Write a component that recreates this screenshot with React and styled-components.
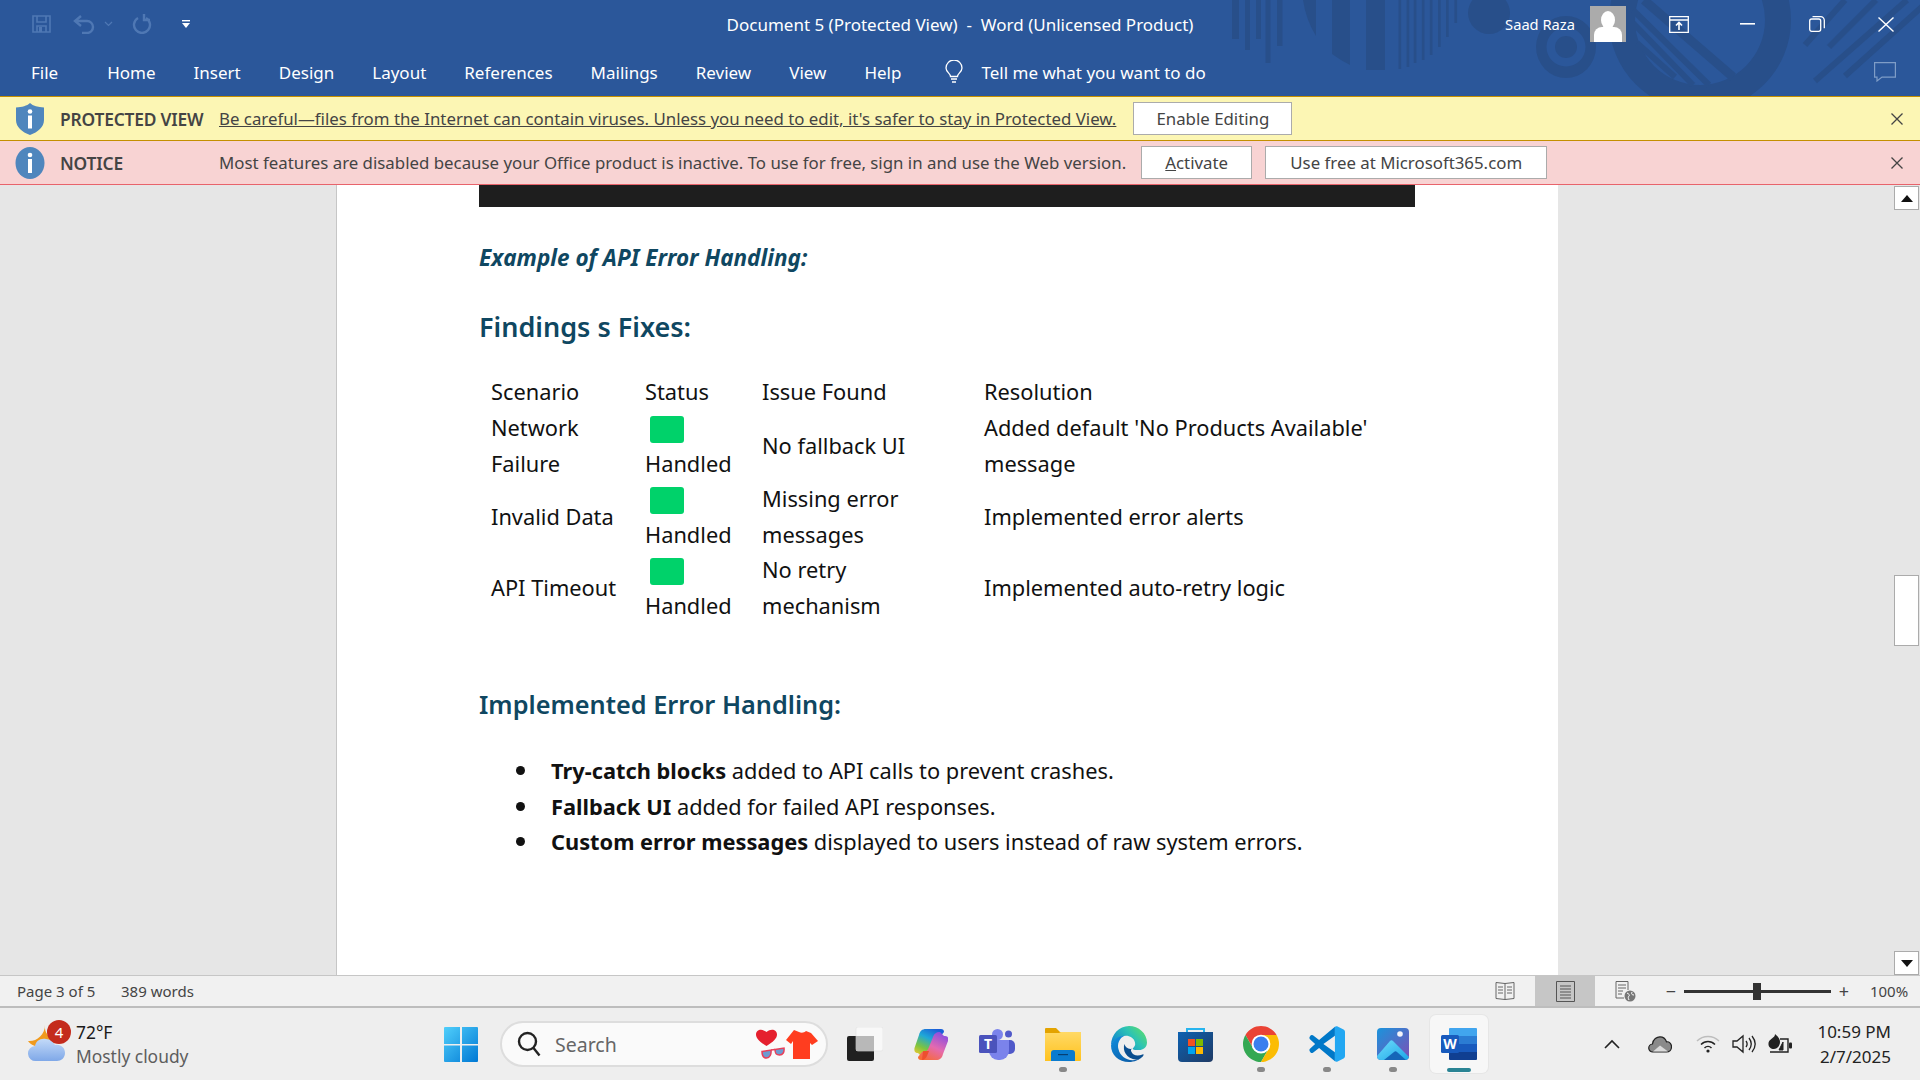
import styled, { createGlobalStyle } from "styled-components";

const UI_FONT = "'Noto Sans', 'Open Sans', sans-serif";
const DOC_FONT = "'Noto Sans', 'Open Sans', sans-serif";

const TABS = ["File", "Home", "Insert", "Design", "Layout", "References", "Mailings", "Review", "View", "Help"];

const ROWS = [
    { id: 1, scenario: <>Network<br />Failure</>, issue: "No fallback UI", fix: <>Added default 'No Products Available'<br />message</> },
    { id: 2, scenario: "Invalid Data", issue: <>Missing error<br />messages</>, fix: "Implemented error alerts" },
    { id: 3, scenario: "API Timeout", issue: <>No retry<br />mechanism</>, fix: "Implemented auto-retry logic" },
];

export default function App() {
    return (
        <Screen>
            <GlobalStyle />
            <TitleBar>
                <RibbonArt />
                <TitleRow>
                    <QuickAccess>
                        <SaveIcon />
                        <UndoIcon />
                        <MiniChevron />
                        <RedoIcon />
                        <CustomizeIcon />
                    </QuickAccess>
                    <DocTitle>Document 5 (Protected View)&nbsp; -&nbsp; Word (Unlicensed Product)</DocTitle>
                    <WindowArea>
                        <UserName>Saad Raza</UserName>
                        <Avatar />
                        <WindowButton><DisplayIcon /></WindowButton>
                        <WindowButton><MinimizeIcon /></WindowButton>
                        <WindowButton><RestoreIcon /></WindowButton>
                        <WindowButton><CloseIcon /></WindowButton>
                    </WindowArea>
                </TitleRow>
                <TabRow>
                    {TABS.map(tab => <Tab key={tab}>{tab}</Tab>)}
                    <BulbIcon />
                    <TellMe>Tell me what you want to do</TellMe>
                    <CommentIcon />
                </TabRow>
            </TitleBar>

            <MessageBar $tone="warning">
                <ShieldIcon />
                <BarLabel>PROTECTED VIEW</BarLabel>
                <BarLink>Be careful—files from the Internet can contain viruses. Unless you need to edit, it's safer to stay in Protected View.</BarLink>
                <BarButton $width={159} $left={17}>Enable Editing</BarButton>
                <BarClose><BarCloseIcon /></BarClose>
            </MessageBar>
            <MessageBar $tone="notice">
                <InfoIcon />
                <BarLabel>NOTICE</BarLabel>
                <BarText>Most features are disabled because your Office product is inactive. To use for free, sign in and use the Web version.</BarText>
                <BarButton $width={111} $left={15}><u>A</u>ctivate</BarButton>
                <BarButton $width={282} $left={13}>Use free at Microsoft365.com</BarButton>
                <BarClose><BarCloseIcon /></BarClose>
            </MessageBar>

            <Workspace>
                <Canvas>
                    <Page>
                        <BlackBlock />
                        <ExampleTitle>Example of API Error Handling:</ExampleTitle>
                        <FindingsTitle>Findings s Fixes:</FindingsTitle>
                        <FindingsTable>
                            <colgroup>
                                <ColA />
                                <ColB />
                                <ColC />
                                <col />
                            </colgroup>
                            <thead>
                                <tr>
                                    <HeadCell>Scenario</HeadCell>
                                    <HeadCell>Status</HeadCell>
                                    <HeadCell>Issue Found</HeadCell>
                                    <HeadCell>Resolution</HeadCell>
                                </tr>
                            </thead>
                            <tbody>
                                {ROWS.map(row =>
                                    <tr key={row.id}>
                                        <Cell>{row.scenario}</Cell>
                                        <Cell>
                                            <ChipLine><GreenChip /></ChipLine>
                                            Handled
                                        </Cell>
                                        <Cell>{row.issue}</Cell>
                                        <Cell>{row.fix}</Cell>
                                    </tr>
                                )}
                            </tbody>
                        </FindingsTable>
                        <ImplementedTitle>Implemented Error Handling:</ImplementedTitle>
                        <BulletList>
                            <li><span><strong>Try-catch blocks</strong> added to API calls to prevent crashes.</span></li>
                            <li><span><strong>Fallback UI</strong> added for failed API responses.</span></li>
                            <li><span><strong>Custom error messages</strong> displayed to users instead of raw system errors.</span></li>
                        </BulletList>
                    </Page>
                </Canvas>
                <ScrollBar>
                    <ScrollButton><ArrowGlyph /></ScrollButton>
                    <ScrollTrack><ScrollThumb /></ScrollTrack>
                    <ScrollButton><ArrowGlyph $down /></ScrollButton>
                </ScrollBar>
            </Workspace>

            <StatusBar>
                <StatusText $width={104}>Page 3 of 5</StatusText>
                <StatusText>389 words</StatusText>
                <ViewArea>
                    <ViewButton><ReadIcon /></ViewButton>
                    <ViewButton $active><PrintIcon /></ViewButton>
                    <ViewButton><WebIcon /></ViewButton>
                </ViewArea>
                <ZoomControl>
                    <ZoomSign>−</ZoomSign>
                    <ZoomTrack><ZoomThumb /></ZoomTrack>
                    <ZoomSign>+</ZoomSign>
                </ZoomControl>
                <ZoomValue>100%</ZoomValue>
            </StatusBar>

            <Taskbar>
                <Weather>
                    <WeatherArt>
                        <WeatherIcon />
                        <WeatherBadge>4</WeatherBadge>
                    </WeatherArt>
                    <WeatherText>
                        <Temperature>72°F</Temperature>
                        <Forecast>Mostly cloudy</Forecast>
                    </WeatherText>
                </Weather>
                <TaskSlot><StartIcon /></TaskSlot>
                <SearchBox>
                    <SearchIcon />
                    <SearchLabel>Search</SearchLabel>
                    <SearchArt />
                </SearchBox>
                <TaskSlot><TaskViewIcon /></TaskSlot>
                <TaskSlot><CopilotIcon /></TaskSlot>
                <TaskSlot><TeamsIcon /></TaskSlot>
                <TaskSlot $running><FolderIcon /></TaskSlot>
                <TaskSlot><EdgeIcon /></TaskSlot>
                <TaskSlot><StoreIcon /></TaskSlot>
                <TaskSlot $running><ChromeIcon /></TaskSlot>
                <TaskSlot $running><VsCodeIcon /></TaskSlot>
                <TaskSlot $running><PhotosIcon /></TaskSlot>
                <TaskSlot $active><WordIcon /></TaskSlot>
                <Tray>
                    <TrayChevron />
                    <TrayCloud />
                    <TrayWifi />
                    <TraySpeaker />
                    <TrayBattery />
                </Tray>
                <Clock>
                    <span>10:59 PM</span>
                    <span>2/7/2025</span>
                </Clock>
            </Taskbar>
        </Screen>
    );
}

/* ---------- drawings ---------- */

function RibbonArt() {
    const bars = [[1232, 7, 39], [1245, 5, 50], [1256, 5, 39], [1265.5, 5, 63], [1277, 5.5, 46], [1366, 19, 70],
        [1398.5, 2.7, 69], [1406.6, 2.7, 67], [1413.7, 2.7, 63], [1421.8, 2.7, 60], [1429.8, 2.7, 55], [1438, 2.7, 47], [1446, 2.7, 37], [1454.4, 2.7, 23]];
    const stripes = [[1644, 0, 1733, 77, 9], [1633, 10, 1709, 85, 6], [1633, 23, 1693, 85, 6], [1637, 43, 1675, 77, 6]];
    const slashes = [[1805, 45, 1845, 0], [1829, 47, 1876, 0], [1815, 81, 1907, 0], [1845, 76, 1925, 4]];
    return (
        <Art viewBox="0 0 1920 96" width="1920" height="96">
            <g fill="#284F8A">
                {bars.map(b => <rect key={b[0]} x={b[0]} y="0" width={b[1]} height={b[2]} />)}
                <path d="M1303 0h13v36Q1306 20 1303 0z" />
                <path d="M1332 0h18v65Q1340 60 1332 54z" />
                <circle cx="1489" cy="13" r="21" />
                <path fillRule="evenodd" d="M1536 47a30 31 0 1 0 60 0a30 31 0 1 0-60 0zM1546.500 47a19.500 19.500 0 1 0 39 0a19.500 19.500 0 1 0-39 0z" />
                <circle cx="1566" cy="47" r="11" />
                <path fillRule="evenodd" d="M1609 20a91 91 0 1 0 182 0a91 91 0 1 0-182 0zM1635 20a65 65 0 1 0 130 0a65 65 0 1 0-130 0z" />
            </g>
            <g stroke="#284F8A" strokeLinecap="butt">
                {stripes.map(s => <line key={s[1]} x1={s[0]} y1={s[1]} x2={s[2]} y2={s[3]} strokeWidth={s[4]} />)}
                {slashes.map(s => <line key={s[0]} x1={s[0]} y1={s[1]} x2={s[2]} y2={s[3]} strokeWidth="6" />)}
            </g>
        </Art>
    );
}

const SaveIcon = () => (
    <QatSvg $left={0} width="19" height="18" viewBox="0 0 19 18" fill="none" stroke="#4F78B4" strokeWidth="1.6">
        <path d="M1 1h17v16H1z" />
        <path d="M5 1v6h9V1M5 17v-6h9v6" />
        <path d="M7 12h3v5H7z" fill="#4F78B4" stroke="none" />
    </QatSvg>
);

const UndoIcon = () => (
    <QatSvg $left={22} width="23" height="19" viewBox="0 0 23 19" fill="none" stroke="#4F78B4" strokeWidth="2.4">
        <path d="M2 6h12a6 6 0 0 1 6 6v0a6 6 0 0 1-6 6H9" />
        <path d="M8 1L2 6l6 5" />
    </QatSvg>
);

const MiniChevron = () => (
    <QatSvg $left={8} width="9" height="6" viewBox="0 0 9 6" fill="none" stroke="#4F78B4" strokeWidth="1.2">
        <path d="M1 1l3.500 3.500L8 1" />
    </QatSvg>
);

const RedoIcon = () => (
    <QatSvg $left={19} width="20" height="20" viewBox="0 0 20 20" fill="none" stroke="#4F78B4" strokeWidth="2.4">
        <path d="M6 4a8 8 0 1 0 8 0" />
        <path d="M12 0v6h6" />
    </QatSvg>
);

const CustomizeIcon = () => (
    <QatSvg $left={30} width="8" height="8" viewBox="0 0 8 8" fill="#fff">
        <rect x="0" y="0" width="8" height="1.400" />
        <path d="M0 3h8L4 8z" />
    </QatSvg>
);

const DisplayIcon = () => (
    <svg width="20" height="17" viewBox="0 0 20 17" fill="none" stroke="#fff" strokeWidth="1.300">
        <path d="M.7.7h18.600v15.600H.7zM.7 4h18.600" />
        <path d="M10 14V7M7 9.500L10 6.500l3 3" strokeWidth="1.600" />
    </svg>
);

const MinimizeIcon = () => (
    <svg width="15" height="2" viewBox="0 0 15 2"><rect width="15" height="1.600" fill="#fff" /></svg>
);

const RestoreIcon = () => (
    <svg width="16" height="16" viewBox="0 0 16 16" fill="none" stroke="#fff" strokeWidth="1.300">
        <rect x=".7" y="3" width="11" height="12.300" rx="2" />
        <path d="M3.500.7h8a3.500 3.500 0 0 1 3.800 3.500v8" />
    </svg>
);

const CloseIcon = () => (
    <svg width="16" height="15" viewBox="0 0 16 15" stroke="#fff" strokeWidth="1.400"><path d="M.5.500l15 14M15.500.500l-15 14" /></svg>
);

const BulbIcon = () => (
    <BulbSvg width="18" height="24" viewBox="0 0 18 24" fill="none" stroke="#fff" strokeWidth="1.300">
        <path d="M5.500 16.500c0-3-4.500-4.500-4.500-8.500a8 8 0 0 1 16 0c0 4-4.500 5.500-4.500 8.500z" />
        <path d="M6 19h6M7 22h4" />
    </BulbSvg>
);

const CommentIcon = () => (
    <CommentSvg width="22" height="20" viewBox="0 0 22 20" fill="none" stroke="#7F9DC7" strokeWidth="1.200">
        <path d="M.6.6h20.800v14.500H8L3 19v-3.900H.6z" />
    </CommentSvg>
);

const ShieldIcon = () => (
    <svg width="30" height="32" viewBox="0 0 30 32">
        <path d="M15 0c3 3 8 4 14 4.500V17c0 7-6 12-14 15C7 29 1 24 1 17V4.500C7 4 12 3 15 0z" fill="#4F86BD" />
        <circle cx="15" cy="8.500" r="2.300" fill="#fff" />
        <rect x="13" y="12.500" width="4" height="13" fill="#fff" />
    </svg>
);

const InfoIcon = () => (
    <svg width="30" height="32" viewBox="0 0 30 32">
        <ellipse cx="15" cy="16" rx="14.500" ry="16" fill="#4F86BD" />
        <circle cx="15" cy="8" r="2.300" fill="#fff" />
        <rect x="13" y="12" width="4" height="14" fill="#fff" />
    </svg>
);

const BarCloseIcon = () => (
    <svg width="12" height="12" viewBox="0 0 12 12" stroke="#444" strokeWidth="1.300"><path d="M.5.500l11 11M11.500.500l-11 11" /></svg>
);

const ReadIcon = () => (
    <svg width="20" height="20" viewBox="0 0 20 20" fill="none" stroke="#666" strokeWidth="1">
        <path d="M1 1.500l9 1 9-1v16l-9 1-9-1zM10 2.500v16" />
        <path d="M3 6h5M3 9h5M3 12h5M12 6h5M12 9h5M12 12h5" />
    </svg>
);

const PrintIcon = () => (
    <svg width="19" height="21" viewBox="0 0 19 21" fill="none" stroke="#555" strokeWidth="1">
        <path d="M.5.500h18v20H.5zM4 5h11M4 8h11M4 11h11M4 14h11M4 17h11" />
    </svg>
);

const WebIcon = () => (
    <svg width="21" height="21" viewBox="0 0 21 21" fill="none" stroke="#666" strokeWidth="1">
        <path d="M9 17H1V.5h12V9M3 4h8M3 7h8M3 10h5M3 13h4" />
        <circle cx="15" cy="15" r="5.500" fill="#777" stroke="none" />
        <path d="M12 12c2 1 3 2 2 3s-1 2 0 4M17 11c-1 2 0 3 2 3" stroke="#fff" />
    </svg>
);

const WeatherIcon = () => (
    <svg width="38" height="38" viewBox="0 0 38 38">
        <defs>
            <linearGradient id="cloudFill" x1="0" y1="0" x2="0" y2="1">
                <stop offset="0" stopColor="#C3DAF8" />
                <stop offset="1" stopColor="#7FA8E8" />
            </linearGradient>
        </defs>
        <path d="M17 0c-1 8 4 13 12 14-3 5-8 8-15 8-6 0-11-2-14-6 8 1 17-6 17-16z" fill="#F09A1E" />
        <path d="M8 36a7.500 7.500 0 0 1-1-15c1-5 5-8 11-7 4 0 7 2 9 6 6-1 10 3 10 8s-4 8-8 8z" fill="url(#cloudFill)" />
    </svg>
);

const StartIcon = () => (
    <svg width="34" height="35" viewBox="0 0 34 35">
        <defs>
            <linearGradient id="startFill" x1="0" y1="0" x2="1" y2="1">
                <stop offset="0" stopColor="#50CFFB" />
                <stop offset="1" stopColor="#0078D4" />
            </linearGradient>
        </defs>
        <path d="M0 1a1 1 0 0 1 1-1h15v17H0zM18 0h15a1 1 0 0 1 1 1v16H18zM0 18.500h16V35H1a1 1 0 0 1-1-1zM18 18.500h16V34a1 1 0 0 1-1 1H18z" fill="url(#startFill)" />
    </svg>
);

const SearchIcon = () => (
    <svg width="24" height="26" viewBox="0 0 24 26" fill="none" stroke="#222" strokeWidth="2.400">
        <circle cx="10.500" cy="10.500" r="8.500" />
        <path d="M16.500 17l6 7.500" />
    </svg>
);

const SearchArt = () => (
    <SearchArtSvg width="62" height="30" viewBox="0 0 62 30">
        <path d="M10.500 17C4 13 0 9.500 0 5.500 0 1 5.500-1 10.500 3c5-4 10.500-2 10.500 2.500 0 4-4 7.500-10.500 11.500z" fill="#E5202E" />
        <path d="M6 22.500l9-1.500c.5 4-1 8-4.500 8S6 26.500 6 22.500zM19 20.500l9-1.500c.5 4-1 7-4.500 7S19 24.500 19 20.500z" fill="#6D9BD1" stroke="#E8405A" strokeWidth="1.500" />
        <path d="M15 21l4-.5" stroke="#E8405A" strokeWidth="1.500" />
        <path d="M38 1l5 2c2 1 5 1 7-1l5 2 7 8-6 4-2-2v16H37V12l-2 3-5-4z" fill="#FF3D1F" />
    </SearchArtSvg>
);

const TaskViewIcon = () => (
    <svg width="36" height="34" viewBox="0 0 36 34">
        <rect x="0" y="9" width="27" height="25" rx="2" fill="#202020" />
        <rect x="9" y="0" width="27" height="24" rx="2" fill="#F8F8F8" stroke="#E0E0E0" strokeWidth=".6" />
        <rect x="9" y="9" width="18" height="15" fill="#B8B8B8" />
    </svg>
);

const CopilotIcon = () => (
    <svg width="34" height="31" viewBox="0 0 34 31">
        <defs>
            <linearGradient id="copilotA" x1=".7" y1="0" x2=".2" y2="1">
                <stop offset="0" stopColor="#1B5FD8" />
                <stop offset=".35" stopColor="#1FA8D8" />
                <stop offset=".7" stopColor="#7DC43F" />
                <stop offset="1" stopColor="#F5C92E" />
            </linearGradient>
            <linearGradient id="copilotB" x1=".7" y1="0" x2=".2" y2="1">
                <stop offset="0" stopColor="#8A4FE0" />
                <stop offset=".5" stopColor="#E46AB0" />
                <stop offset="1" stopColor="#F86B32" />
            </linearGradient>
        </defs>
        <path d="M12 0h15c2 0 3 1 3 3l-4 5c-4 0-6 2-7 5l-4 10c-1 3-3 5-7 5l-4-4H4c-3 0-4-2-3.500-5L5 6C6 2 8 0 12 0z" fill="url(#copilotA)" />
        <path d="M22 31H7c-2 0-3-1-3-3l4-5c4 0 6-2 7-5l4-10c1-3 3-5 7-5l4 4h1c3 0 3.500 2 3 5l-5 13c-1 4-3 6-7 6z" fill="url(#copilotB)" />
        <path d="M9 22h6l-2 5c-1 2-3 4-5 4z" fill="#EE4F2E" />
    </svg>
);

const TeamsIcon = () => (
    <svg width="36" height="32" viewBox="0 0 36 32">
        <circle cx="18.500" cy="6.500" r="5.500" fill="#7B83EB" />
        <circle cx="29.500" cy="6" r="3.500" fill="#5059C9" />
        <rect x="24" y="12" width="12" height="14" rx="5" fill="#5059C9" />
        <path d="M10 12h20v11a9 9 0 0 1-9 9h-2a9 9 0 0 1-9-9z" fill="#7B83EB" />
        <rect x="0" y="7" width="18" height="18" rx="1.500" fill="#4B53BC" />
        <text x="9" y="21" textAnchor="middle" fill="#fff" fontSize="14" fontWeight="700" fontFamily="'Noto Sans', sans-serif">T</text>
    </svg>
);

const FolderIcon = () => (
    <svg width="36" height="33" viewBox="0 0 36 33">
        <defs>
            <linearGradient id="folderFill" x1="0" y1="0" x2="0" y2="1">
                <stop offset="0" stopColor="#FFD966" />
                <stop offset="1" stopColor="#FFC21E" />
            </linearGradient>
        </defs>
        <path d="M0 1a1 1 0 0 1 1-1h10l4 4h21v6H0z" fill="#E3A300" />
        <path d="M0 5h14l2-1h20v28a1 1 0 0 1-1 1H0z" fill="url(#folderFill)" />
        <path d="M6 25a3 3 0 0 1 3-3h18a3 3 0 0 1 3 3v8H6z" fill="#0A7BCF" />
        <rect x="13" y="26" width="10" height="1.200" fill="#063F73" />
    </svg>
);

const EdgeIcon = () => (
    <svg width="36" height="36" viewBox="0 0 48 48">
        <defs>
            <linearGradient id="edgeTop" x1="0" y1=".8" x2="1" y2=".2">
                <stop offset="0" stopColor="#0C7BD3" />
                <stop offset=".6" stopColor="#2CC3B5" />
                <stop offset="1" stopColor="#5BDD6C" />
            </linearGradient>
            <linearGradient id="edgeLeft" x1="0" y1="0" x2=".7" y2="1">
                <stop offset="0" stopColor="#0F8FE0" />
                <stop offset="1" stopColor="#0B5DA8" />
            </linearGradient>
        </defs>
        <path d="M24 0c13 0 24 10 24 22 0 7-6 10-10 10h-6c-2 0-3-1-3-2 2-2 4-4 3-8-1-6-7-9-12-9C11 13 3 20 0 26 0 11 11 0 24 0z" fill="url(#edgeTop)" />
        <path d="M0 26c3-8 10-13 18-13-7 3-10 11-8 18 2 9 12 17 24 14 3-1 6-2 8-4-4 4-11 7-18 7C10 48 0 38 0 26z" fill="url(#edgeLeft)" />
        <path d="M18 24c-3 8 2 20 16 21 3 0 6-2 8-4 2-2 2-4 0-3-7 3-13 1-15-4-1-2 0-4 2-4-5 2-10-1-11-6z" fill="#0A4E8F" />
    </svg>
);

const StoreIcon = () => (
    <svg width="35" height="35" viewBox="0 0 35 35">
        <defs>
            <linearGradient id="storeFill" x1="0" y1="0" x2="1" y2="1">
                <stop offset="0" stopColor="#0D62B2" />
                <stop offset="1" stopColor="#1F3A64" />
            </linearGradient>
        </defs>
        <path d="M9 6V2h17v4" fill="none" stroke="#27B4EE" strokeWidth="2" />
        <path d="M0 5h35v26a4 4 0 0 1-4 4H4a4 4 0 0 1-4-4z" fill="url(#storeFill)" />
        <rect x="10" y="12" width="7" height="7" fill="#F25022" />
        <rect x="18" y="12" width="7" height="7" fill="#7FBA00" />
        <rect x="10" y="20" width="7" height="7" fill="#00A4EF" />
        <rect x="18" y="20" width="7" height="7" fill="#FFB900" />
    </svg>
);

const ChromeIcon = () => (
    <svg width="36" height="36" viewBox="0 0 48 48">
        <path d="M3.220 12A24 24 0 0 1 44.780 12H24L13.600 30z" fill="#EA4335" />
        <path d="M3.220 12L13.600 30H34.400L24 48A24 24 0 0 1 3.220 12z" fill="#34A853" />
        <path d="M44.780 12H24L34.400 30 24 48A24 24 0 0 0 44.780 12z" fill="#FBBC04" />
        <circle cx="24" cy="24" r="12.500" fill="#fff" />
        <circle cx="24" cy="24" r="10" fill="#3B7FEE" />
    </svg>
);

const VsCodeIcon = () => (
    <svg width="36" height="36" viewBox="0 0 100 100">
        <path d="M72 2L28 39 11 26Q8 24 5 26L2 30Q0 33 2 36L17 50 2 64Q0 67 2 70L5 74Q8 76 11 74L28 61 72 98V73L40 50 72 27z" fill="#0078C8" />
        <path d="M72 2Q75 0 78 1L96 10Q100 12 100 16V84Q100 88 96 90L78 99Q75 100 72 98z" fill="#22A7F2" />
    </svg>
);

const PhotosIcon = () => (
    <svg width="32" height="32" viewBox="0 0 32 32">
        <defs>
            <linearGradient id="photosSky" x1="0" y1="0" x2="1" y2="1">
                <stop offset="0" stopColor="#1A94DC" />
                <stop offset="1" stopColor="#7E4FB5" />
            </linearGradient>
            <linearGradient id="photosHill" x1="0" y1="0" x2="1" y2="1">
                <stop offset="0" stopColor="#6FDCFB" />
                <stop offset="1" stopColor="#1CA6E8" />
            </linearGradient>
        </defs>
        <rect width="32" height="32" rx="4" fill="url(#photosSky)" />
        <circle cx="23" cy="6" r="2.800" fill="#F4F4FA" />
        <path d="M0 28L13 13c1-1 2-1 3 0l16 16v-1 0a4 4 0 0 1-4 4H4a4 4 0 0 1-4-4z" fill="url(#photosHill)" />
        <path d="M7 32l10-8c1-1 2-1 3 0l9 8z" fill="#1566B8" />
    </svg>
);

const WordIcon = () => (
    <svg width="36" height="32" viewBox="0 0 36 32">
        <path d="M9 0h26a1 1 0 0 1 1 1v7H8V1a1 1 0 0 1 1-1z" fill="#41A5EE" />
        <rect x="8" y="8" width="28" height="8" fill="#2B7CD3" />
        <rect x="8" y="16" width="28" height="8" fill="#185ABD" />
        <path d="M8 24h28v7a1 1 0 0 1-1 1H9a1 1 0 0 1-1-1z" fill="#103F91" />
        <rect x="0" y="7" width="18" height="18" rx="1.500" fill="#185ABD" />
        <text x="9" y="21" textAnchor="middle" fill="#fff" fontSize="14" fontWeight="700" fontFamily="'Noto Sans', sans-serif">W</text>
    </svg>
);

const TrayChevron = () => (
    <TraySvg $gap={28} width="16" height="10" viewBox="0 0 16 10" fill="none" stroke="#222" strokeWidth="1.600">
        <path d="M1 9l7-7 7 7" />
    </TraySvg>
);

const TrayCloud = () => (
    <TraySvg $gap={24} width="24" height="17" viewBox="0 0 24 17">
        <path d="M5 16a4 4 0 0 1-.5-8C5 3 9 .8 12 .8c3 0 5.500 2 6.500 5 3-.3 5 2 5 5s-2 5.200-5 5.200z" fill="#8A8A8A" stroke="#222" strokeWidth="1.200" />
        <path d="M5 15.400l7-6 8 6z" fill="#DADADA" />
    </TraySvg>
);

const TrayWifi = () => (
    <TraySvg $gap={12} width="24" height="18" viewBox="0 0 24 18" fill="none" strokeWidth="1.500">
        <path d="M1 6c6-6 16-6 22 0" stroke="#BDBDBD" />
        <path d="M5 9.500c4-4 10-4 14 0M8.500 13c2-2 5-2 7 0" stroke="#222" />
        <circle cx="12" cy="16" r="1.600" fill="#222" />
    </TraySvg>
);

const TraySpeaker = () => (
    <TraySvg $gap={12} width="24" height="20" viewBox="0 0 24 20" fill="none" stroke="#222" strokeWidth="1.300">
        <path d="M1 7h4l6-5v16l-6-5H1zM14 7c1.500 2 1.500 4 0 6M17 4c3 4 3 8 0 12M20 2c4 5 4 11 0 16" />
    </TraySvg>
);

const TrayBattery = () => (
    <TraySvg $gap={0} width="24" height="20" viewBox="0 0 24 20">
        <path d="M7 0c2 2 5 4 5 8s-3 7-6 7-6-2-5.500-6C1 6 4 5 5 3.500 6 3 7 2 7 0z" fill="#222" />
        <path d="M12 5h8v13H2" fill="none" stroke="#222" strokeWidth="1.400" />
        <rect x="21" y="8.500" width="3" height="6" rx="1" fill="#222" />
        <path d="M5 15l5-7M11 16l4-8v8z" stroke="#222" strokeWidth="1" fill="#222" />
    </TraySvg>
);

/* ---------- page ---------- */

const GlobalStyle = createGlobalStyle`
    html, body {
        margin: 0;
        padding: 0;
        overflow: hidden;
    }

    * {
        box-sizing: border-box;
    }
`;

const Screen = styled.div`
    width: 1920px;
    height: 1080px;
    display: flex;
    flex-direction: column;
    overflow: hidden;
    font-family: ${UI_FONT};
    color: #444444;
`;

const TitleBar = styled.header`
    position: relative;
    height: 96px;
    flex: none;
    background-color: #2B579A;
    color: #FFFFFF;
`;

const Art = styled.svg`
    position: absolute;
    top: 0;
    left: 0;
`;

const TitleRow = styled.div`
    position: relative;
    height: 48px;
    display: grid;
    grid-template-columns: 1fr auto 1fr;
    align-items: center;
`;

const QuickAccess = styled.div`
    display: flex;
    align-items: center;
    padding-left: 32px;
`;

const QatSvg = styled.svg`
    flex: none;
    margin-left: ${props => props.$left}px;
`;

const DocTitle = styled.div`
    font-size: 17px;
    white-space: nowrap;
`;

const WindowArea = styled.div`
    display: flex;
    align-items: center;
    justify-content: flex-end;
    height: 48px;
`;

const UserName = styled.span`
    font-size: 14.7px;
    margin-right: 15px;
`;

const Avatar = styled.div`
    position: relative;
    width: 36px;
    height: 36px;
    margin-right: 18px;
    background-color: #ABABAB;
    overflow: hidden;

    &::before {
        content: "";
        position: absolute;
        top: 5px;
        left: 11px;
        width: 14px;
        height: 18px;
        border-radius: 50%;
        background-color: #FFFFFF;
    }

    &::after {
        content: "";
        position: absolute;
        top: 21px;
        left: 4px;
        width: 28px;
        height: 16px;
        border-radius: 8px 8px 0 0;
        background-color: #FFFFFF;
    }
`;

const WindowButton = styled.div`
    width: 69px;
    height: 48px;
    display: flex;
    align-items: center;
    justify-content: center;
`;

const TabRow = styled.nav`
    position: relative;
    height: 48px;
    display: flex;
    align-items: center;
    gap: 38px;
    padding-left: 31px;
`;

const Tab = styled.span`
    font-size: 17px;

    &:first-child {
        margin-right: 11px;
    }
`;

const BulbSvg = styled.svg`
    margin-left: 6px;
    flex: none;
`;

const TellMe = styled.span`
    font-size: 17px;
    margin-left: -20px;
`;

const CommentSvg = styled.svg`
    margin-left: auto;
    margin-right: 24px;
`;

const MessageBar = styled.div`
    height: ${props => props.$tone === 'warning' ? 45 : 44}px;
    flex: none;
    display: flex;
    align-items: center;
    padding-left: 15px;
    font-size: 16.83px;
    white-space: nowrap;
    background-color: ${props => props.$tone === 'warning' ? '#FCF6B4' : '#F8D3D3'};
    border-top: ${props => props.$tone === 'warning' ? '1px solid #C48F00' : 'none'};
    border-bottom: 1px solid ${props => props.$tone === 'warning' ? '#C48F00' : '#E8636B'};
`;

const BarLabel = styled.span`
    width: 159px;
    margin-left: 15px;
    font-weight: 600;
    font-size: 17.4px;
    letter-spacing: -0.2px;
`;

const BarText = styled.span`
`;

const BarLink = styled(BarText)`
    text-decoration: underline;
`;

const BarButton = styled.div`
    width: ${props => props.$width}px;
    height: 33px;
    margin-left: ${props => props.$left}px;
    display: flex;
    align-items: center;
    justify-content: center;
    background-color: #FFFFFF;
    border: 1px solid #ABABAB;
`;

const BarClose = styled.div`
    margin-left: auto;
    margin-right: 17px;
    display: flex;
`;

const Workspace = styled.main`
    flex: 1;
    min-height: 0;
    display: flex;
    background-color: #E6E6E6;
`;

const Canvas = styled.div`
    flex: 1;
    display: flex;
    justify-content: center;
    overflow: hidden;
`;

const Page = styled.article`
    width: 1222px;
    padding: 0 143px 0 142px;
    background-color: #FFFFFF;
    border-left: 1px solid #C6C6C6;
    font-family: ${DOC_FONT};
    color: #111111;
    font-size: 21.8px;
`;

const BlackBlock = styled.div`
    height: 22px;
    background-color: #1E1E1E;
`;

const ExampleTitle = styled.h4`
    margin: 36px 0 0;
    line-height: 30px;
    font-size: 22.5px;
    font-style: italic;
    font-weight: 700;
    color: #0F4761;
`;

const FindingsTitle = styled.h3`
    margin: 36px 0 0;
    line-height: 36px;
    font-size: 27px;
    font-weight: 600;
    color: #0F4761;
`;

const ImplementedTitle = styled(FindingsTitle)`
    margin-top: 63px;
    font-size: 25.3px;
`;

const FindingsTable = styled.table`
    width: 100%;
    margin-top: 29px;
    border-collapse: collapse;
    table-layout: fixed;
`;

const ColA = styled.col`
    width: 154px;
`;

const ColB = styled.col`
    width: 117px;
`;

const ColC = styled.col`
    width: 222px;
`;

const HeadCell = styled.th`
    padding: 0 0 0 12px;
    height: 36px;
    line-height: 36px;
    font-weight: 400;
    text-align: left;
`;

const Cell = styled.td`
    padding: 0 0 0 12px;
    line-height: 35.5px;
    white-space: nowrap;
    vertical-align: middle;
`;

const ChipLine = styled.div`
    height: 35.5px;
    display: flex;
    align-items: center;
    padding: 3px 0 0 5px;
`;

const GreenChip = styled.span`
    width: 34px;
    height: 27px;
    border-radius: 3px;
    background-color: #00D26A;
`;

const BulletList = styled.ul`
    margin: 31px 0 0;
    padding: 0 0 0 37px;
    list-style: none;
    line-height: 35.5px;

    li {
        display: flex;
        align-items: center;
    }

    li::before {
        content: "";
        width: 9px;
        height: 9px;
        margin-right: 26px;
        border-radius: 50%;
        background-color: #111111;
    }

    strong {
        font-weight: 700;
    }
`;

const ScrollBar = styled.aside`
    width: 26px;
    padding: 1px 1px 0 0;
    display: flex;
    flex-direction: column;
`;

const ScrollButton = styled.div`
    height: 24px;
    flex: none;
    display: flex;
    align-items: center;
    justify-content: center;
    background-color: #FFFFFF;
    border: 1px solid #ABABAB;
`;

const ArrowGlyph = styled.span`
    width: 0;
    height: 0;
    border-left: 6px solid transparent;
    border-right: 6px solid transparent;
    ${props => props.$down ? 'border-top: 7px solid #111111;' : 'border-bottom: 7px solid #111111;'}
`;

const ScrollTrack = styled.div`
    flex: 1;
    padding-top: 365px;
`;

const ScrollThumb = styled.div`
    height: 71px;
    background-color: #FFFFFF;
    border: 1px solid #ABABAB;
`;

const StatusBar = styled.footer`
    height: 33px;
    flex: none;
    display: flex;
    align-items: center;
    padding-left: 17px;
    font-size: 15px;
    background-color: #F1F1F1;
    border-top: 1px solid #C6C6C6;
    border-bottom: 2px solid #BDBDBD;
`;

const StatusText = styled.span`
    width: ${props => props.$width ? `${props.$width}px` : 'auto'};
`;

const ViewArea = styled.div`
    margin-left: auto;
    display: flex;
    align-self: stretch;
`;

const ViewButton = styled.div`
    width: 60px;
    display: flex;
    align-items: center;
    justify-content: center;
    background-color: ${props => props.$active ? '#C6C6C6' : 'transparent'};
`;

const ZoomControl = styled.div`
    margin-left: 9px;
    display: flex;
    align-items: center;
`;

const ZoomSign = styled.span`
    width: 14px;
    text-align: center;
    font-size: 18px;
    line-height: 18px;
`;

const ZoomTrack = styled.div`
    position: relative;
    width: 147px;
    height: 3px;
    margin: 0 6px;
    background-color: #333333;
`;

const ZoomThumb = styled.div`
    position: absolute;
    top: -7px;
    left: 69px;
    width: 8px;
    height: 17px;
    background-color: #333333;
`;

const ZoomValue = styled.span`
    width: 62px;
    margin-left: 7px;
    text-align: center;
    font-size: 15px;
`;

const Taskbar = styled.div`
    height: 72px;
    flex: none;
    display: flex;
    align-items: center;
    background-color: #EEEEEE;
`;

const Weather = styled.div`
    flex: 0 0 428px;
    display: flex;
    align-items: center;
    padding-left: 28px;
`;

const WeatherArt = styled.div`
    position: relative;
    width: 38px;
    height: 38px;
    margin-right: 10px;
`;

const WeatherBadge = styled.span`
    position: absolute;
    top: -5px;
    right: -5px;
    width: 24px;
    height: 24px;
    border-radius: 50%;
    display: flex;
    align-items: center;
    justify-content: center;
    background-color: #C42B1C;
    color: #FFFFFF;
    font-size: 15px;
`;

const WeatherText = styled.div`
    display: flex;
    flex-direction: column;
    line-height: 24px;
    font-size: 17.4px;
`;

const Temperature = styled.span`
    color: #1A1A1A;
`;

const Forecast = styled.span`
    color: #5D5D5D;
`;

const TaskSlot = styled.div`
    position: relative;
    flex: 0 0 66px;
    height: 72px;
    display: flex;
    align-items: center;
    justify-content: center;

    ${props => props.$active && `
        &::before {
            content: "";
            position: absolute;
            top: 7px;
            left: 4px;
            width: 58px;
            height: 58px;
            border-radius: 6px;
            background-color: #F7F7F7;
            box-shadow: 0 0 0 1px #E6E6E6;
        }
        svg { position: relative; }
    `}

    &::after {
        content: ${props => props.$active || props.$running ? '""' : 'none'};
        position: absolute;
        left: 50%;
        bottom: 8px;
        width: ${props => props.$active ? 24 : 8}px;
        height: ${props => props.$active ? 4 : 5}px;
        transform: translateX(-50%);
        border-radius: 3px;
        background-color: ${props => props.$active ? '#2A8494' : '#888888'};
    }
`;

const SearchBox = styled.div`
    flex: 0 0 328px;
    height: 46px;
    margin: 0 4px 0 6px;
    display: flex;
    align-items: center;
    padding: 0 8px 0 15px;
    border-radius: 23px;
    background-color: #FAFAFA;
    border: 2px solid #DDDDDD;
`;

const SearchLabel = styled.span`
    margin-left: 14px;
    font-size: 19.500px;
    color: #666666;
`;

const SearchArtSvg = styled.svg`
    margin-left: auto;
`;

const Tray = styled.div`
    margin-left: 112px;
    display: flex;
    align-items: center;
    width: 190px;
`;

const TraySvg = styled.svg`
    flex: none;
    margin-right: ${props => props.$gap}px;
`;

const Clock = styled.div`
    margin-left: auto;
    margin-right: 29px;
    display: flex;
    flex-direction: column;
    align-items: flex-end;
    line-height: 25px;
    font-size: 17px;
    color: #222222;
`;
